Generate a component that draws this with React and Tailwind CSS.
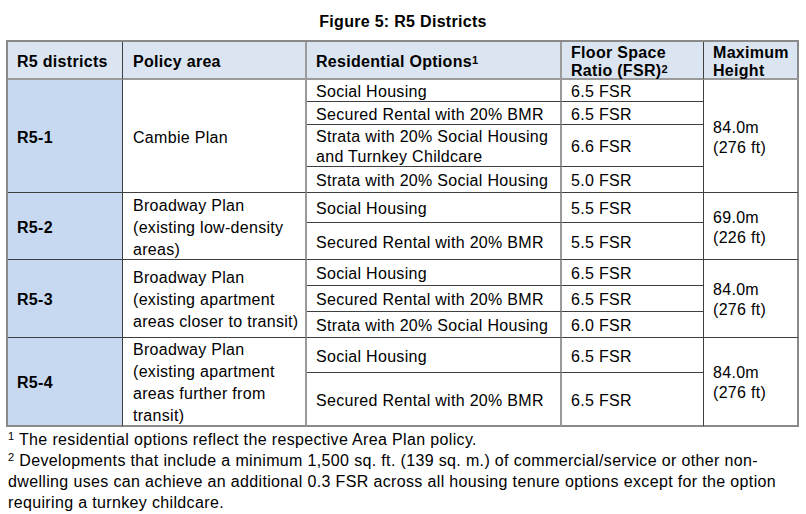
import React from "react";

const DARK = "border-[#3f3f3f]";

// one table cell; borders are drawn on the right/bottom edges
function Cell({ children, className = "" }) {
  return (
    <div className={`flex items-center pt-[3px] text-[16px] tracking-[0.3px] text-black ${className}`}>
      {children}
    </div>
  );
}

function Sup({ n }) {
  return <span className="align-top text-[11px] leading-[14px]">{n}</span>;
}

export default function App() {
  const head = "bg-[#dbe5f1] font-bold leading-[18px] border-b-2 border-b-[#9a9a9a]";
  const sub = `border-b ${DARK}`;

  return (
    <div className="w-[806px] h-[514px] bg-white overflow-hidden" style={{ fontFamily: '"Liberation Sans", Arial, sans-serif' }}>
      <div className="h-[40px] pt-[3px] flex items-center justify-center text-[16px] tracking-[0.3px] font-bold text-black">
        Figure 5: R5 Districts
      </div>

      <div className="ml-[6px] w-[793px] grid grid-cols-[115px_184px_255px_142px_95px] grid-rows-[38px_22px_23px_42px_26px_30px_37px_26px_26px_26px_35px_54px] border-t-2 border-l-2 border-[#8a8a8a]">
        {/* header */}
        <Cell className={`${head} bg-[#c6d9f1] pl-[9px] border-r ${DARK}`}>R5 districts</Cell>
        <Cell className={`${head} pl-[10px] border-r-2 border-r-[#9a9a9a]`}>Policy area</Cell>
        <Cell className={`${head} pl-[9px] border-r-2 border-r-[#9a9a9a]`}>
          <span>Residential Options<Sup n="1" /></span>
        </Cell>
        <Cell className={`${head} pl-[9px] border-r ${DARK}`}>
          <span>Floor Space<br />Ratio (FSR)<Sup n="2" /></span>
        </Cell>
        <Cell className={`${head} pl-[9px] border-r-2 border-r-[#8a8a8a]`}>
          <span>Maximum<br />Height</span>
        </Cell>

        {/* R5-1 */}
        <Cell className={`row-span-4 bg-[#c6d9f1] font-bold pl-[9px] border-r border-b ${DARK}`}>R5-1</Cell>
        <Cell className={`row-span-4 pl-[10px] leading-[22px] border-b ${DARK} border-r-2 border-r-[#9a9a9a]`}>Cambie Plan</Cell>
        <Cell className={`pl-[9px] ${sub} border-r-2 border-r-[#9a9a9a]`}>Social Housing</Cell>
        <Cell className={`pl-[9px] ${sub} border-r`}>6.5 FSR</Cell>
        <Cell className={`row-span-4 pl-[9px] leading-[20px] border-b ${DARK} border-r-2 border-r-[#8a8a8a]`}>
          <span>84.0m<br />(276 ft)</span>
        </Cell>
        <Cell className={`pl-[9px] ${sub} border-r-2 border-r-[#9a9a9a]`}>Secured Rental with 20% BMR</Cell>
        <Cell className={`pl-[9px] ${sub} border-r`}>6.5 FSR</Cell>
        <Cell className={`pl-[9px] leading-[20px] ${sub} border-r-2 border-r-[#9a9a9a]`}>
          <span>Strata with 20% Social Housing<br />and Turnkey Childcare</span>
        </Cell>
        <Cell className={`pl-[9px] ${sub} border-r`}>6.6 FSR</Cell>
        <Cell className={`pl-[9px] ${sub} border-r-2 border-r-[#9a9a9a]`}>Strata with 20% Social Housing</Cell>
        <Cell className={`pl-[9px] ${sub} border-r`}>5.0 FSR</Cell>

        {/* R5-2 */}
        <Cell className={`row-span-2 bg-[#c6d9f1] font-bold pl-[9px] border-r border-b ${DARK}`}>R5-2</Cell>
        <Cell className={`row-span-2 pl-[10px] leading-[22px] border-b ${DARK} border-r-2 border-r-[#9a9a9a]`}>
          <span>Broadway Plan<br />(existing low-density<br />areas)</span>
        </Cell>
        <Cell className={`pl-[9px] ${sub} border-r-2 border-r-[#9a9a9a]`}>Social Housing</Cell>
        <Cell className={`pl-[9px] ${sub} border-r`}>5.5 FSR</Cell>
        <Cell className={`row-span-2 pl-[9px] leading-[20px] border-b ${DARK} border-r-2 border-r-[#8a8a8a]`}>
          <span>69.0m<br />(226 ft)</span>
        </Cell>
        <Cell className={`pl-[9px] ${sub} border-r-2 border-r-[#9a9a9a]`}>Secured Rental with 20% BMR</Cell>
        <Cell className={`pl-[9px] ${sub} border-r`}>5.5 FSR</Cell>

        {/* R5-3 */}
        <Cell className={`row-span-3 bg-[#c6d9f1] font-bold pl-[9px] border-r border-b ${DARK}`}>R5-3</Cell>
        <Cell className={`row-span-3 pl-[10px] leading-[22px] border-b ${DARK} border-r-2 border-r-[#9a9a9a]`}>
          <span>Broadway Plan<br />(existing apartment<br />areas closer to transit)</span>
        </Cell>
        <Cell className={`pl-[9px] ${sub} border-r-2 border-r-[#9a9a9a]`}>Social Housing</Cell>
        <Cell className={`pl-[9px] ${sub} border-r`}>6.5 FSR</Cell>
        <Cell className={`row-span-3 pl-[9px] leading-[20px] border-b ${DARK} border-r-2 border-r-[#8a8a8a]`}>
          <span>84.0m<br />(276 ft)</span>
        </Cell>
        <Cell className={`pl-[9px] ${sub} border-r-2 border-r-[#9a9a9a]`}>Secured Rental with 20% BMR</Cell>
        <Cell className={`pl-[9px] ${sub} border-r`}>6.5 FSR</Cell>
        <Cell className={`pl-[9px] ${sub} border-r-2 border-r-[#9a9a9a]`}>Strata with 20% Social Housing</Cell>
        <Cell className={`pl-[9px] ${sub} border-r`}>6.0 FSR</Cell>

        {/* R5-4 */}
        <Cell className={`row-span-2 bg-[#c6d9f1] font-bold pl-[9px] border-r border-b-2 ${DARK} border-b-[#8a8a8a]`}>R5-4</Cell>
        <Cell className={`row-span-2 pl-[10px] leading-[22px] border-b-2 border-b-[#8a8a8a] border-r-2 border-r-[#9a9a9a]`}>
          <span>Broadway Plan<br />(existing apartment<br />areas further from<br />transit)</span>
        </Cell>
        <Cell className={`pl-[9px] ${sub} border-r-2 border-r-[#9a9a9a]`}>Social Housing</Cell>
        <Cell className={`pl-[9px] ${sub} border-r`}>6.5 FSR</Cell>
        <Cell className={`row-span-2 pl-[9px] leading-[20px] border-b-2 border-b-[#8a8a8a] border-r-2 border-r-[#8a8a8a]`}>
          <span>84.0m<br />(276 ft)</span>
        </Cell>
        <Cell className={`pl-[9px] border-b-2 border-b-[#8a8a8a] border-r-2 border-r-[#9a9a9a]`}>Secured Rental with 20% BMR</Cell>
        <Cell className={`pl-[9px] border-b-2 border-b-[#8a8a8a] border-r ${DARK}`}>6.5 FSR</Cell>
      </div>

      <div className="pl-[8px] pt-[2px] text-[16px] tracking-[0.35px] leading-[21px] text-black">
        <p>
          <Sup n="1" /> The residential options reflect the respective Area Plan policy.
        </p>
        <p>
          <Sup n="2" /> Developments that include a minimum 1,500 sq. ft. (139 sq. m.) of commercial/service or other non-
          <br />
          dwelling uses can achieve an additional 0.3 FSR across all housing tenure options except for the option
          <br />
          requiring a turnkey childcare.
        </p>
      </div>
    </div>
  );
}
